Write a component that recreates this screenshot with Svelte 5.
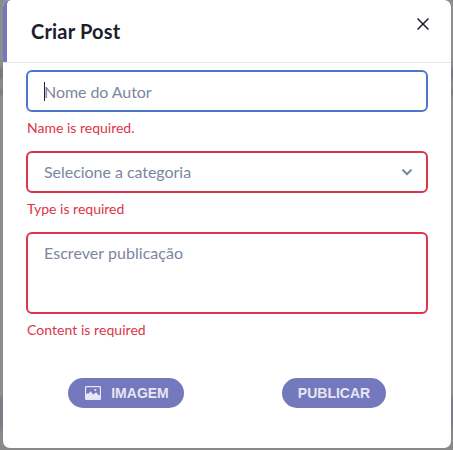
<script>
  const fields = [
    { kind: 'input', label: 'Nome do Autor', error: 'Name is required.', focused: true },
    { kind: 'select', label: 'Selecione a categoria', error: 'Type is required' },
    { kind: 'textarea', label: 'Escrever publicação', error: 'Content is required' }
  ];
</script>

<div class="backdrop">
  <section class="modal">
    <header>
      <h1>Criar Post</h1>
      <button class="close" aria-label="Fechar">
        <svg width="12" height="12" viewBox="0 0 12 12"><path d="M.5.5 11.5 11.5M11.5.5.5 11.5" fill="none" stroke="#1a202c" stroke-width="1.5" /></svg>
      </button>
    </header>
    <form>
      {#each fields as f}
        <div class="field {f.kind}" class:focused={f.focused}>
          {#if f.focused}<i class="caret"></i>{/if}
          <span>{f.label}</span>
          {#if f.kind === 'select'}
            <svg width="20" height="20" viewBox="0 0 24 24"><path fill="#718096" stroke="#718096" stroke-width=".6" d="M16.59 8.59 12 13.17 7.41 8.59 6 10l6 6 6-6z" /></svg>
          {/if}
        </div>
        <p class="{f.kind}-error">{f.error}</p>
      {/each}
    </form>
    <footer>
      <button type="button" class="pill image">
        <svg width="16" height="14" viewBox="0 0 16 14"><path fill="#e6e6f4" fill-rule="evenodd" d="M1.2 0h13.6Q16 0 16 1.2v11.6q0 1.2-1.2 1.2H1.2Q0 14 0 12.8V1.2Q0 0 1.2 0ZM1.2 1.2V8.6L2.6 7.2 3.4 7.8 5.4 5.2 8.2 8.6 11.2 6.2 13 8.8 14.8 9.2V1.2ZM9.2 4a1.1 1.1 0 1 0 2.2 0 1.1 1.1 0 1 0-2.2 0Z" /></svg>
        <span>IMAGEM</span>
      </button>
      <button type="button" class="pill publish">PUBLICAR</button>
    </footer>
  </section>
</div>

<style>
  * { box-sizing: border-box; }
  .backdrop {
    width: 453px;
    height: 450px;
    padding: 0 2px 2px 3px;
    overflow: hidden;
    background: linear-gradient(180deg, #8d8d8d 0 65px, #77777f 71px 76px, #8b8b8b 82px 87px, #7b7b80 92px, #8d8d8d 98px 394px, #7c7c86 400px 425px, #898989 432px);
    font-family: Lato, sans-serif;
  }
  .modal {
    height: 448px;
    display: flex;
    flex-direction: column;
    overflow: hidden;
    border-radius: 7px;
    background: #fff;
  }
  header {
    height: 63px;
    flex: none;
    display: flex;
    justify-content: space-between;
    align-items: flex-start;
    padding: 16px 22px 0 28px;
    border-bottom: 1px solid #e2e8f0;
    background:
      radial-gradient(circle at 100% 100%, transparent 3.5px, #7479bd 4px) 4px 0 / 4px 4px no-repeat,
      linear-gradient(#7479bd, #7479bd) left / 4px 100% no-repeat;
  }
  h1 {
    margin: 0;
    color: #1a202c;
    font-size: 20px;
    font-weight: 700;
    line-height: 30px;
    letter-spacing: 0.2px;
  }
  button {
    border: 0;
    padding: 0;
    background: none;
  }
  .close { height: 16px; display: flex; align-items: center; }
  form { padding: 7px 23px 0; }
  .field {
    display: flex;
    align-items: center;
    width: 402px;
    height: 42px;
    padding: 0 9px 0 16px;
    border: 2px solid #dc354a;
    border-radius: 6px;
    color: #7c86a0;
    font-size: 16px;
    line-height: 24px;
    position: relative;
  }
  .field span { flex: 1; }
  .focused { border-color: #4c78cc; }
  .input { padding-top: 2px; letter-spacing: -0.07px; }
  .select { letter-spacing: -0.04px; }
  .textarea { height: 82px; align-items: flex-start; padding-top: 7px; letter-spacing: 0.05px; }
  .caret {
    position: absolute;
    left: 16px;
    top: 10px;
    width: 1px;
    height: 19px;
    background: #1a202c;
  }
  p {
    margin: 0;
    padding: 6px 1px 13px;
    color: #dc354a;
    font-size: 14px;
    line-height: 20px;
  }
  .textarea-error { letter-spacing: 0.05px; }
  footer {
    display: flex;
    justify-content: space-between;
    padding: 25px 65px 0;
  }
  .pill {
    display: flex;
    align-items: center;
    justify-content: center;
    height: 30px;
    border-radius: 15px;
    background: #7479bd;
    color: #e6e6f4;
    font: 700 14px/20px "Liberation Sans", Arial, sans-serif;
  }
  .image { width: 116px; gap: 10px; padding-left: 2px; }
  .publish { width: 104px; }
</style>
